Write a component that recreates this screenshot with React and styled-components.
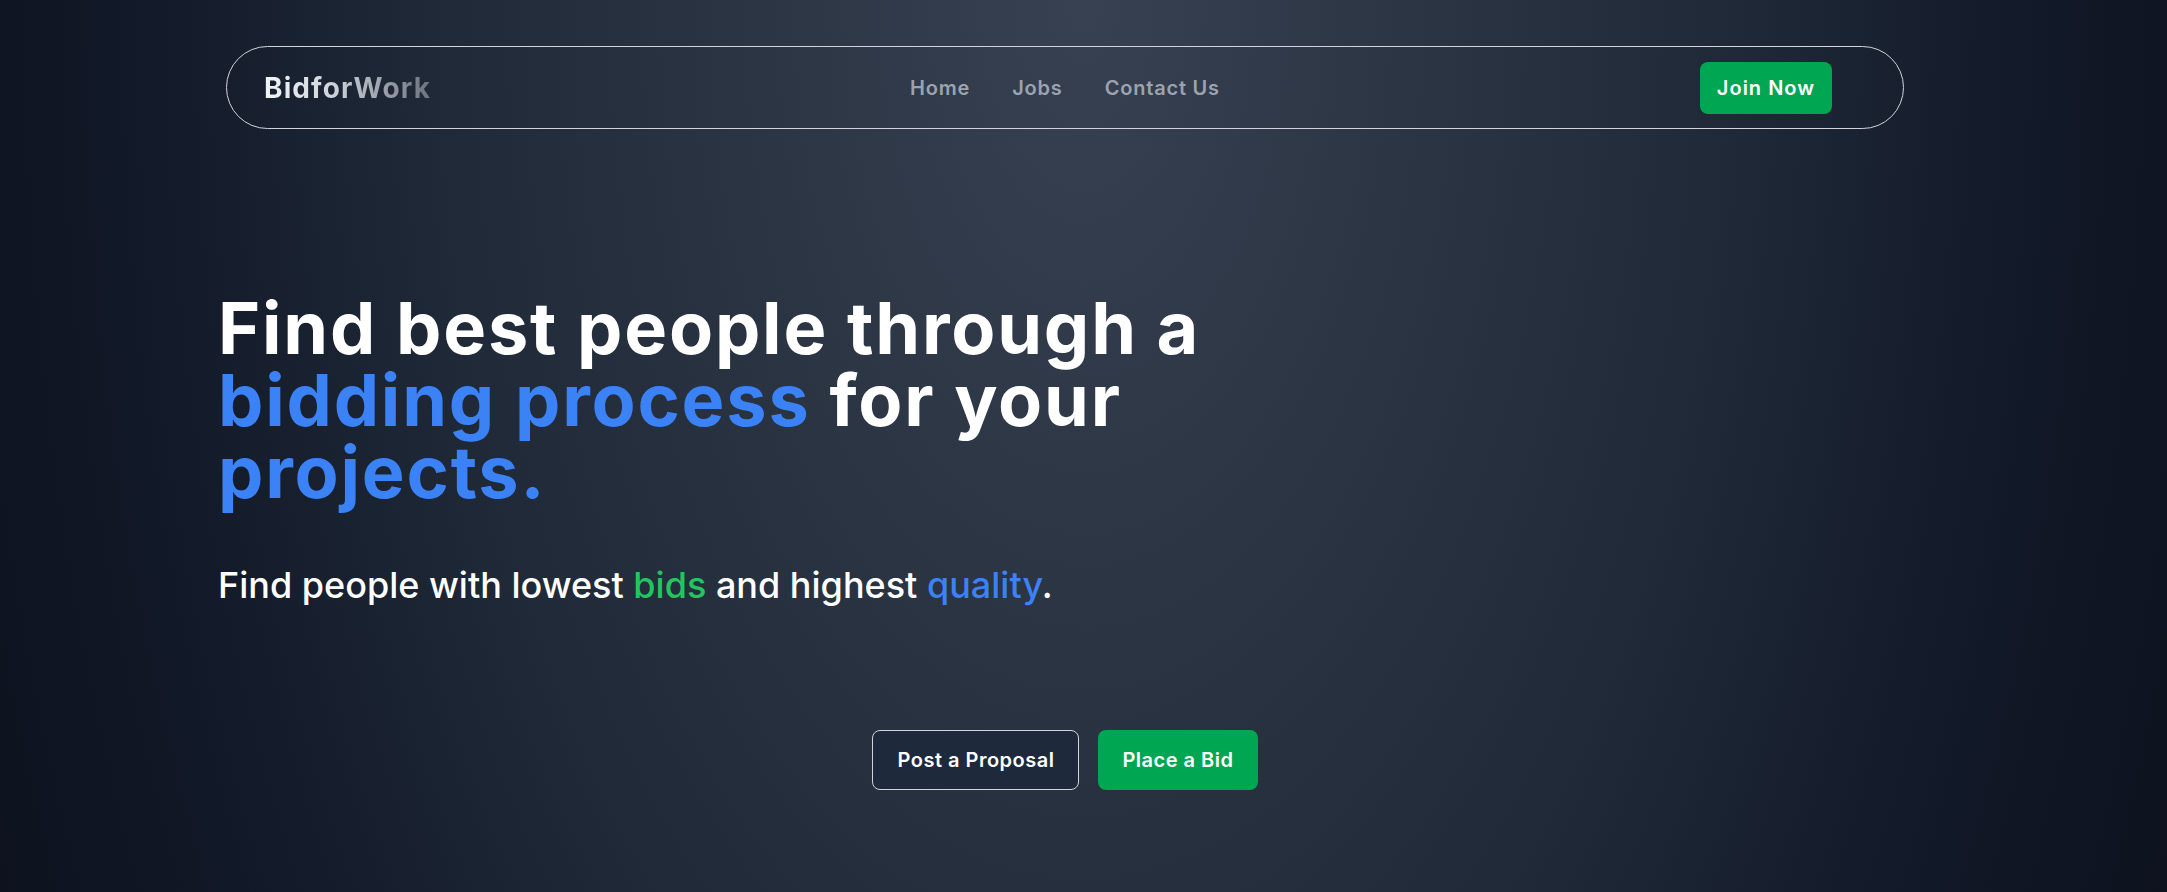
import React from 'react';
import styled, { createGlobalStyle } from 'styled-components';

const GlobalStyle = createGlobalStyle`
  html, body {
    margin: 0;
    padding: 0;
  }
  body {
    font-family: Inter, "Noto Sans", "Liberation Sans", sans-serif;
    background: #111827;
  }
  * {
    box-sizing: border-box;
  }
`;

const Page = styled.div`
  width: 100%;
  min-height: 100vh;
  background: radial-gradient(
    ellipse 1300px 2400px at 50% 0%,
    #374151 0%,
    #1f2937 50%,
    #111827 75%,
    #0b0f19 100%
  );
  overflow: hidden;
`;

const Inner = styled.div`
  width: 2130px;
  padding-top: 46px;
`;

const Nav = styled.nav`
  margin: 0 226px;
  height: 83px;
  border: 1px solid #d1d5db;
  border-radius: 9999px;
  display: grid;
  grid-template-columns: 1fr auto 1fr;
  align-items: center;
  padding: 0 37px;
  letter-spacing: 0.05em;
`;

const Logo = styled.div`
  font-size: 28px;
  font-weight: 700;
  line-height: 1;
  letter-spacing: 0.04em;
  background: linear-gradient(90deg, #f3f4f6 0%, #d1d5db 40%, #6b7280 100%);
  -webkit-background-clip: text;
  background-clip: text;
  color: transparent;
  justify-self: start;
`;

const NavLinks = styled.ul`
  display: flex;
  gap: 42px;
  list-style: none;
  margin: 0;
  padding: 0;
`;

const NavLink = styled.a`
  font-size: 20px;
  font-weight: 600;
  color: #9ca3af;
  text-decoration: none;
  cursor: pointer;
`;

const Button = styled.button`
  font-family: inherit;
  font-size: 20px;
  font-weight: 600;
  line-height: 28px;
  letter-spacing: ${p => (p.$small ? '0.05em' : '0.025em')};
  color: #ffffff;
  border-radius: 8px;
  cursor: pointer;
  background: ${p => (p.$outline ? '#1e293b' : '#00a651')};
  border: ${p => (p.$outline ? '1px solid #d1d5db' : 'none')};
  padding: ${p => (p.$outline ? '15px 24px' : p.$small ? '12px 17px' : '16px 24px')};
`;

const JoinWrap = styled.div`
  justify-self: end;
  padding-right: 34px;
`;

const Hero = styled.section`
  padding-left: 218px;
  margin-top: 163px;
`;

const Heading = styled.h1`
  margin: 0;
  font-size: 72px;
  line-height: 72px;
  font-weight: 700;
  letter-spacing: 0.025em;
  color: #ffffff;
  max-width: 1080px;
`;

const Accent = styled.span`
  color: ${p => p.$color};
`;

const Subtitle = styled.p`
  margin: 57px 0 0;
  font-size: 36px;
  line-height: 40px;
  font-weight: 500;
  color: #ffffff;
`;

const Actions = styled.div`
  display: flex;
  justify-content: center;
  gap: 19px;
  margin-top: 125px;
`;

const links = ['Home', 'Jobs', 'Contact Us'];

const App = () => {
    return (
        <Page>
            <GlobalStyle />
            <Inner>
                <Nav>
                    <Logo>BidforWork</Logo>
                    <NavLinks>
                        {links.map(l => (
                            <li key={l}>
                                <NavLink>{l}</NavLink>
                            </li>
                        ))}
                    </NavLinks>
                    <JoinWrap>
                        <Button $small>Join Now</Button>
                    </JoinWrap>
                </Nav>
                <Hero>
                    <Heading>
                        Find best people through a <Accent $color="#3b82f6">bidding process</Accent> for your{' '}
                        <Accent $color="#3b82f6">projects.</Accent>
                    </Heading>
                    <Subtitle>
                        Find people with lowest <Accent $color="#22c55e">bids</Accent> and highest{' '}
                        <Accent $color="#3b82f6">quality</Accent>.
                    </Subtitle>
                </Hero>
                <Actions>
                    <Button $outline>Post a Proposal</Button>
                    <Button>Place a Bid</Button>
                </Actions>
            </Inner>
        </Page>
    );
};

export default App;
